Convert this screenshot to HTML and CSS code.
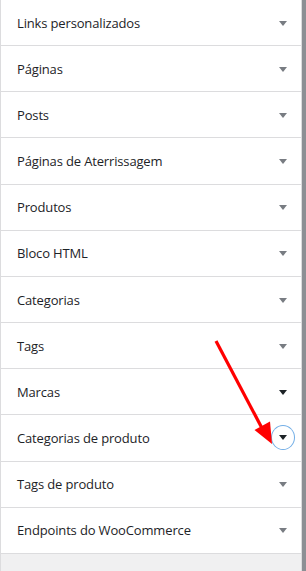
FILE: index.html
```html
<!DOCTYPE html>
<html lang="pt-BR">
<head>
<meta charset="utf-8">
<title>Menus</title>
<link rel="stylesheet" href="styles.css">
</head>
<body>
<div class="panel">
  <div class="list">
    <div class="row"><span class="title">Links personalizados</span><span class="toggle"></span></div>
    <div class="row"><span class="title">Páginas</span><span class="toggle"></span></div>
    <div class="row"><span class="title">Posts</span><span class="toggle"></span></div>
    <div class="row"><span class="title">Páginas de Aterrissagem</span><span class="toggle"></span></div>
    <div class="row"><span class="title">Produtos</span><span class="toggle"></span></div>
    <div class="row"><span class="title">Bloco HTML</span><span class="toggle"></span></div>
    <div class="row"><span class="title">Categorias</span><span class="toggle"></span></div>
    <div class="row"><span class="title">Tags</span><span class="toggle"></span></div>
    <div class="row"><span class="title">Marcas</span><span class="toggle dark"></span></div>
    <div class="row"><span class="title">Categorias de produto</span><span class="toggle dark focus"></span></div>
    <div class="row"><span class="title">Tags de produto</span><span class="toggle"></span></div>
    <div class="row"><span class="title">Endpoints do WooCommerce</span><span class="toggle"></span></div>
  </div>
  <div class="scrollbar"></div>
  <svg class="pointer" width="306" height="571" viewBox="0 0 306 571">
    <line x1="216" y1="341" x2="264" y2="432" stroke="#ff0000" stroke-width="3.2" stroke-linecap="butt"/>
    <polygon points="272,444 254.5,430 270,421.5" fill="#ff0000"/>
  </svg>
</div>
</body>
</html>
```
FILE: styles.css
```css
html, body {
  margin: 0;
  padding: 0;
}
body {
  background: #f0f0f1;
  font-family: "Open Sans", "Noto Sans", sans-serif;
  color: #1d2327;
}
.panel {
  position: relative;
  display: flex;
  height: 571px;
  width: 306px;
  overflow: hidden;
}
.list {
  width: 300px;
  border-left: 1px solid #dcdcde;
  border-right: 1px solid #dcdcde;
  background: #f0f0f1;
  display: flex;
  flex-direction: column;
}
.row {
  flex: none;
  height: 45.17px;
  box-sizing: content-box;
  border-bottom: 1px solid #dcdcde;
  background: #fff;
  display: flex;
  align-items: center;
  justify-content: space-between;
  padding: 0 7px 0 16px;
}
.title {
  font-size: 13px;
  line-height: 18px;
  color: #1d2327;
  letter-spacing: -0.15px;
}
.toggle {
  position: relative;
  width: 22px;
  height: 22px;
  border-radius: 50%;
  flex: none;
}
.toggle::after {
  content: "";
  position: absolute;
  left: 7px;
  top: 9px;
  width: 0;
  height: 0;
  border-left: 4px solid transparent;
  border-right: 4px solid transparent;
  border-top: 5px solid #787c82;
}
.toggle.dark::after {
  border-top-color: #1d2327;
}
.toggle.focus {
  box-shadow: 0 0 0 1px #72aee6;
  height: 23px;
}
.scrollbar {
  width: 4px;
  background: #8c8f94;
}
.pointer {
  position: absolute;
  left: 0;
  top: 0;
  pointer-events: none;
}
```
